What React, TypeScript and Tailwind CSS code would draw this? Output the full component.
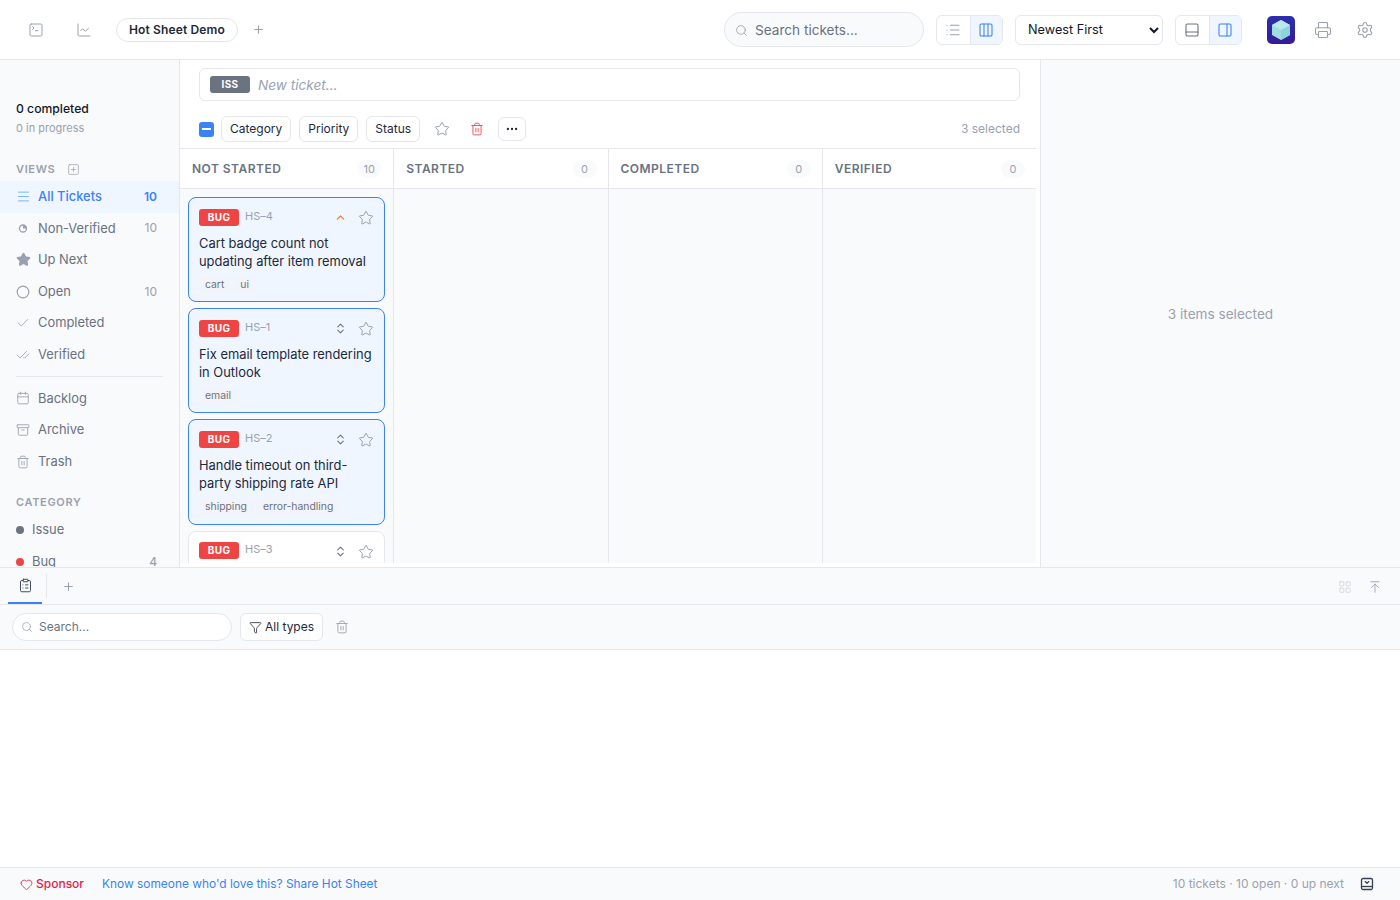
import {
  SquareTerminal,
  ChartLine,
  Plus,
  Search,
  List,
  Columns3,
  PanelBottom,
  PanelRight,
  Printer,
  Settings,
  SquarePlus,
  Menu,
  Star,
  Circle,
  Check,
  CheckCheck,
  Calendar,
  Archive,
  Trash2,
  ChevronUp,
  ChevronsUpDown,
  Ellipsis,
  ClipboardList,
  Funnel,
  LayoutGrid,
  ArrowUpToLine,
  Heart,
} from 'lucide-react';

function PieIcon() {
  return (
    <svg width="14" height="14" viewBox="0 0 14 14" fill="none" className="text-gray-400">
      <circle cx="7" cy="7.5" r="3.5" stroke="currentColor" strokeWidth="1.3" />
      <path d="M7 7.5V4a3.5 3.5 0 0 1 3.5 3.5H7Z" fill="currentColor" />
    </svg>
  );
}

function DrawerIcon() {
  return (
    <svg width="14" height="14" viewBox="0 0 14 14" fill="none" stroke="#374151" strokeWidth="1.3">
      <rect x="1.5" y="1.5" width="11" height="11" rx="1.5" />
      <path d="M1.5 9.5h11" />
      <path d="M5.2 4.6 7 6.2l1.8-1.6" strokeLinecap="round" strokeLinejoin="round" />
    </svg>
  );
}

function Logo() {
  return (
    <div className="w-[28px] h-[28px] rounded-[5px] bg-gradient-to-b from-[#2a2fb0] to-[#351a96] flex items-center justify-center">
      <svg width="20" height="22" viewBox="0 0 20 22">
        <path d="M10 1 19 6v10l-9 5-9-5V6Z" fill="#9fdde3" />
        <path d="M10 11 19 6v10l-9 5Z" fill="#8fd3dc" />
        <path d="M10 1 19 6l-9 5-9-5Z" fill="#b9e9ec" />
      </svg>
    </div>
  );
}

const views = [
  { label: 'All Tickets', count: '10', icon: <Menu size={15} strokeWidth={1.3} />, active: true },
  { label: 'Non-Verified', count: '10', icon: <PieIcon /> },
  { label: 'Up Next', icon: <Star size={15} fill="currentColor" /> },
  { label: 'Open', count: '10', icon: <Circle size={14} /> },
  { label: 'Completed', icon: <Check size={14} strokeWidth={1.5} /> },
  { label: 'Verified', icon: <CheckCheck size={14} strokeWidth={1.5} /> },
];

const bins = [
  { label: 'Backlog', icon: <Calendar size={14} strokeWidth={1.5} /> },
  { label: 'Archive', icon: <Archive size={14} strokeWidth={1.5} /> },
  { label: 'Trash', icon: <Trash2 size={14} strokeWidth={1.5} /> },
];

const tickets = [
  { id: 'HS-4', title: 'Cart badge count not updating after item removal', tags: ['cart', 'ui'], up: true, selected: true },
  { id: 'HS-1', title: 'Fix email template rendering in Outlook', tags: ['email'], selected: true },
  { id: 'HS-2', title: 'Handle timeout on third-party shipping rate API', tags: ['shipping', 'error-handling'], selected: true },
  { id: 'HS-3', title: '', tags: [] },
];

const columns = [
  { title: 'NOT STARTED', count: 10 },
  { title: 'STARTED', count: 0 },
  { title: 'COMPLETED', count: 0 },
  { title: 'VERIFIED', count: 0 },
];

function Sidebar() {
  return (
    <aside className="w-[180px] shrink-0 bg-[#f9fafb] border-r border-gray-200 overflow-hidden pt-[40px]">
      <div className="px-4">
        <div className="text-[12.2px] leading-[18px] font-medium text-gray-900">0 completed</div>
        <div className="text-[11px] leading-[16px] mt-[2px] text-gray-400">0 in progress</div>
      </div>
      <div className="flex items-center gap-3 px-4 mt-[25px] h-[16px] text-[11px] font-semibold tracking-[0.06em] text-gray-400">
        VIEWS
        <SquarePlus size={13} strokeWidth={1.3} />
      </div>
      <div className="mt-[4px]">
        {views.map((v) => (
          <div
            key={v.label}
            className={`flex items-center h-[31.6px] pl-4 pr-[22px] text-[12.9px] ${v.active ? 'bg-[#eff6ff] text-[#3b82f6] font-medium' : 'text-gray-500'}`}
          >
            <span className={`w-[22px] flex justify-start ${v.active ? 'text-[#60a5fa]' : 'text-gray-400'}`}>{v.icon}</span>
            <span className="flex-1">{v.label}</span>
            {v.count && <span className={`text-[12px] ${v.active ? 'font-semibold' : 'text-gray-400'}`}>{v.count}</span>}
          </div>
        ))}
      </div>
      <div className="mx-4 mt-[5px] mb-[6px] border-t border-gray-200" />
      {bins.map((v) => (
        <div key={v.label} className="flex items-center h-[31.6px] pl-4 text-[12.9px] text-gray-500">
          <span className="w-[22px] text-gray-400">{v.icon}</span>
          {v.label}
        </div>
      ))}
      <div className="px-4 mt-[17px] text-[11px] leading-[16px] font-semibold tracking-[0.06em] text-gray-400">CATEGORY</div>
      <div className="flex items-center h-[31.6px] mt-[4px] pl-4 text-[12.9px] text-gray-500">
        <span className="w-2 h-2 rounded-full bg-[#6b7280] mr-2" />
        Issue
      </div>
      <div className="flex items-center h-[31.6px] pl-4 pr-[22px] text-[12.9px] text-gray-500">
        <span className="w-2 h-2 rounded-full bg-[#ef4444] mr-2" />
        <span className="flex-1">Bug</span>
        <span className="text-[12px] font-medium text-gray-400">4</span>
      </div>
    </aside>
  );
}

function TicketCard({ ticket }: { ticket: (typeof tickets)[number] }) {
  return (
    <div
      className={`shrink-0 min-h-[105.2px] rounded-lg px-[10px] pt-[11px] pb-[7px] ${ticket.selected ? 'bg-[#eff6ff] border border-[#3b82f6]' : 'bg-white border border-gray-200'}`}
    >
      <div className="flex items-center h-[16px]">
        <span className="w-[40px] h-[17px] rounded-[3px] bg-[#ef4444] text-white text-[10px] font-bold tracking-[0.04em] flex items-center justify-center">
          BUG
        </span>
        <span className="ml-[6px] text-[11px] text-gray-400 -mt-[2px]">{ticket.id.replace('-', '–')}</span>
        <span className="ml-auto mr-[11px] mt-[1px]">
          {ticket.up ? (
            <ChevronUp size={13} className="text-[#f97316]" />
          ) : (
            <ChevronsUpDown size={13} className="text-gray-500" />
          )}
        </span>
        <Star size={16} strokeWidth={1.5} className="text-gray-400 mt-[2px]" />
      </div>
      {ticket.title && <div className="mt-[10px] text-[12.9px] leading-[18px] text-gray-800">{ticket.title}</div>}
      <div className="flex gap-[4px] mt-[6px]">
        {ticket.tags.map((t) => (
          <span key={t} className="px-[6px] h-[16px] leading-[16px] rounded-[3px] bg-gray-100/70 text-[10.4px] text-gray-500">
            {t}
          </span>
        ))}
      </div>
    </div>
  );
}

function Board() {
  return (
    <div className="flex-1 min-w-0 flex flex-col overflow-hidden bg-white">
      <div className="pl-[19px] pr-[20px] pt-[8px]">
        <div className="h-[33px] rounded-md border border-gray-200 flex items-center pl-[10px]">
          <span className="w-[40px] h-[17px] rounded-[3px] bg-[#6b7280] text-white text-[10px] font-bold tracking-[0.04em] flex items-center justify-center">
            ISS
          </span>
          <span className="ml-2 text-[13.6px] leading-[20px] pt-[1px] italic text-gray-400">New ticket...</span>
        </div>
      </div>
      <div className="flex items-center h-[26px] mt-[15px] pl-[19px] pr-[20px] text-[12px] text-gray-800">
        <span className="w-[15px] h-[15px] rounded-[3px] bg-[#3b82f6] flex items-center justify-center mr-[7px]">
          <span className="w-[9px] h-[2px] bg-white" />
        </span>
        <span className="h-[26px] px-[8px] mr-[8px] leading-[24px] rounded-md border border-gray-200">Category</span>
        <span className="h-[26px] px-[8px] mr-[8px] leading-[24px] rounded-md border border-gray-200">Priority</span>
        <span className="h-[26px] px-[8px] leading-[24px] rounded-md border border-gray-200">Status</span>
        <Star size={16} strokeWidth={1.5} className="ml-[14px] text-gray-400" />
        <Trash2 size={14} strokeWidth={1.5} className="ml-[20px] text-[#ef4444]" />
        <span className="ml-[14px] w-[28px] h-[24px] rounded-md border border-gray-200 flex items-center justify-center">
          <Ellipsis size={14} />
        </span>
        <span className="ml-auto text-gray-400">3 selected</span>
      </div>
      <div className="mt-[6px] mr-[4px] mb-[4px] flex-1 min-h-0 border-t border-gray-200 flex overflow-hidden">
        {columns.map((c, i) => (
          <div key={c.title} className={`flex-1 min-w-0 flex flex-col bg-[#f9fafb] ${i < 3 ? 'border-r border-gray-200' : ''}`}>
            <div className={`h-[40px] shrink-0 bg-white border-b border-gray-200 flex items-center justify-between pl-[12px] pt-[1px] ${c.count > 0 ? 'pr-[12px]' : 'pr-[11px]'}`}>
              <span className="text-[12px] font-semibold tracking-[0.04em] text-gray-500">{c.title}</span>
              <span className="min-w-[24px] h-[18px] px-[6px] rounded-full bg-[#f9fafb] text-[11px] leading-[18px] text-center text-gray-400">
                {c.count}
              </span>
            </div>
            {i === 0 && (
              <div className="flex flex-col gap-[6px] px-[8px] pt-[8px]">
                {tickets.map((t) => (
                  <TicketCard key={t.id} ticket={t} />
                ))}
              </div>
            )}
          </div>
        ))}
      </div>
    </div>
  );
}

export default function App() {
  return (
    <div className="h-screen flex flex-col bg-white overflow-hidden font-['Inter',sans-serif]">
      <header className="h-[60px] shrink-0 border-b border-gray-200 flex items-center pl-[28px] pr-[26px]">
        <SquareTerminal size={16} strokeWidth={1.5} className="text-gray-400" />
        <ChartLine size={16} strokeWidth={1.5} className="text-gray-400 ml-[32px]" />
        <span className="ml-[24px] h-[24px] px-[12px] rounded-full border border-gray-200 text-[12px] tracking-[0.012em] leading-[22px] font-semibold text-gray-800">
          Hot Sheet Demo
        </span>
        <Plus size={13} className="ml-[14px] text-gray-400" />
        <div className="ml-auto w-[200px] h-[35px] rounded-full border border-gray-200 bg-[#f9fafb] flex items-center pl-[10px] pt-[1px] text-[13.6px] text-gray-500">
          <Search size={13} strokeWidth={1.5} className="text-gray-400 mr-[7px]" />
          Search tickets...
        </div>
        <div className="ml-[12px] flex h-[30px] rounded-md border border-gray-200 overflow-hidden">
          <span className="w-[32.5px] flex items-center justify-center text-gray-400">
            <List size={16} strokeWidth={1.6} />
          </span>
          <span className="w-[32.5px] flex items-center justify-center bg-[#eff6ff] border-l border-gray-200 text-[#3b82f6]">
            <Columns3 size={16} strokeWidth={1.6} />
          </span>
        </div>
        <select className="ml-[12px] w-[148px] h-[30px] pl-[8px] rounded-md border border-gray-200 bg-white text-[12.7px] text-gray-900" defaultValue="newest">
          <option value="newest">Newest First</option>
        </select>
        <div className="ml-[12px] flex h-[30px] rounded-md border border-gray-200 overflow-hidden">
          <span className="w-[32.5px] flex items-center justify-center text-gray-500">
            <PanelBottom size={16} strokeWidth={1.6} />
          </span>
          <span className="w-[32.5px] flex items-center justify-center bg-[#eff6ff] border-l border-gray-200 text-[#3b82f6]">
            <PanelRight size={16} strokeWidth={1.6} />
          </span>
        </div>
        <span className="ml-[25px]">
          <Logo />
        </span>
        <Printer size={18} strokeWidth={1.5} className="ml-[19px] text-gray-400" />
        <Settings size={18} strokeWidth={1.5} className="ml-[24px] text-gray-400" />
      </header>

      <main className="h-[508px] shrink-0 flex border-b border-gray-200 overflow-hidden">
        <Sidebar />
        <Board />
        <div className="w-[360px] shrink-0 bg-[#f9fafb] border-l border-gray-200 flex items-center justify-center pt-[1px] text-[13.6px] text-gray-400">
          3 items selected
        </div>
      </main>

      <section className="flex-1 min-h-0 flex flex-col">
        <div className="h-[37px] shrink-0 bg-[#f9fafb] border-b border-gray-200 flex items-center pl-[8px] pr-[18px]">
          <span className="relative w-[34px] h-[36px] flex items-center justify-center text-gray-700 border-b-2 border-[#3b82f6]">
            <ClipboardList size={15} strokeWidth={1.5} />
          </span>
          <span className="ml-[4px] h-[24px] border-l border-gray-200" />
          <Plus size={13} className="ml-[15px] text-gray-400" />
          <LayoutGrid size={14} strokeWidth={1.5} className="ml-auto mt-[2px] text-gray-300" />
          <ArrowUpToLine size={14} strokeWidth={1.5} className="ml-[16px] mt-[2px] text-gray-400" />
        </div>
        <div className="h-[45px] shrink-0 bg-[#f9fafb] border-b border-gray-200 flex items-center pl-[12px]">
          <div className="w-[220px] h-[28px] rounded-full border border-gray-200 bg-white flex items-center pl-[8px] text-[12px] text-gray-500">
            <Search size={12} strokeWidth={1.5} className="text-gray-400 mr-[6px]" />
            Search...
          </div>
          <span className="ml-[8px] h-[28px] px-[8px] rounded-md border border-gray-200 bg-white flex items-center gap-[3px] text-[12px] text-gray-800">
            <Funnel size={13} strokeWidth={1.5} />
            All types
          </span>
          <Trash2 size={14} strokeWidth={1.5} className="ml-[12px] text-gray-400" />
        </div>
        <div className="flex-1" />
        <footer className="h-[33px] shrink-0 bg-[#f9fafb] border-t border-gray-200 flex items-center pl-[20px] pr-[26px] text-[12px]">
          <Heart size={13} strokeWidth={1.5} className="text-[#e11d48] mr-[3px]" />
          <span className="font-medium text-[#e11d48]">Sponsor</span>
          <span className="ml-[18px] text-[11.9px] text-[#3b82f6]">Know someone who'd love this? Share Hot Sheet</span>
          <span className="ml-auto text-gray-400">10 tickets · 10 open · 0 up next</span>
          <span className="ml-[16px]">
            <DrawerIcon />
          </span>
        </footer>
      </section>
    </div>
  );
}
